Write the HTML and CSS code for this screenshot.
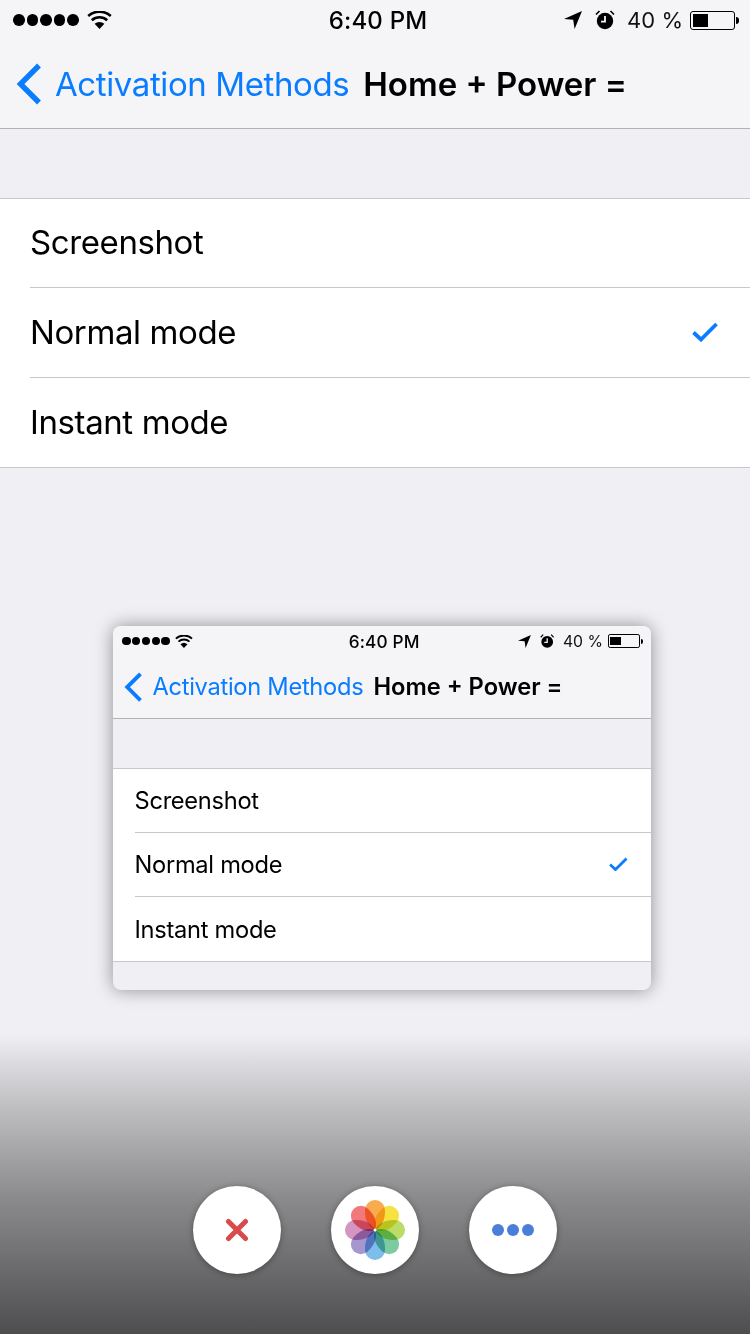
FILE: index.html
```html
<!DOCTYPE html>
<html lang="en">
<head>
  <meta charset="UTF-8" />
  <meta name="viewport" content="width=device-width, initial-scale=1.0"/>
  <title>Home + Power =</title>
  <link rel="stylesheet" href="styles.css">
</head>
<body>

<!-- icons shared by the page and its preview -->
<svg class="defs" width="0" height="0">
  <symbol id="i-wifi" viewBox="0 0 25 18">
    <path d="M7.600 12.800a7.400 7.400 0 0 1 9.800 0L12.500 18Z"/>
    <path d="M4.800 9.200a11.600 11.600 0 0 1 15.400 0" fill="none" stroke="#000" stroke-width="2.600"/>
    <path d="M1.200 5a17 17 0 0 1 22.600 0" fill="none" stroke="#000" stroke-width="2.600"/>
  </symbol>
  <symbol id="i-arrow" viewBox="0 0 18 18">
    <path d="M18 0 10.600 18l-1.400-9.200L0 8Z"/>
  </symbol>
  <symbol id="i-alarm" viewBox="0 0 20 20">
    <circle cx="10" cy="11" r="8.200"/>
    <path d="M10 6v5.600H6" fill="none" stroke="#f5f5f8" stroke-width="1.800"/>
    <path d="M1 4.500 4.500 1M19 4.500 15.500 1" fill="none" stroke="#000" stroke-width="1.600"/>
  </symbol>
  <symbol id="i-back" viewBox="0 0 26 42">
    <path d="M23 2.500 4.500 21 23 39.500" fill="none" stroke="#0a7cff" stroke-width="5.400"/>
  </symbol>
  <symbol id="i-check" viewBox="0 0 26 20">
    <path d="M1.500 10.500 9 17.500 24.500 2" fill="none" stroke="#0a7cff" stroke-width="3.800"/>
  </symbol>
</svg>

<main class="page">
  <div class="screen">
    <div class="status">
      <div class="status-left">
        <span class="signal"><i></i><i></i><i></i><i></i><i></i></span>
        <svg class="ic-wifi"><use href="#i-wifi"/></svg>
      </div>
      <div class="clock">6:40 PM</div>
      <div class="status-right">
        <svg class="ic-arrow"><use href="#i-arrow"/></svg>
        <svg class="ic-alarm"><use href="#i-alarm"/></svg>
        <span class="percent">40 %</span>
        <span class="battery"><b></b></span>
      </div>
    </div>
    <nav class="nav">
      <svg class="ic-back"><use href="#i-back"/></svg>
      <span class="back">Activation Methods</span>
      <span class="title">Home + Power =</span>
    </nav>
    <div class="spacer"></div>
    <ul class="list">
      <li>Screenshot</li>
      <li>Normal mode <svg class="ic-check"><use href="#i-check"/></svg></li>
      <li>Instant mode</li>
    </ul>
  </div>

  <div class="preview">
    <div class="screen">
      <div class="status">
        <div class="status-left">
          <span class="signal"><i></i><i></i><i></i><i></i><i></i></span>
          <svg class="ic-wifi"><use href="#i-wifi"/></svg>
        </div>
        <div class="clock">6:40 PM</div>
        <div class="status-right">
          <svg class="ic-arrow"><use href="#i-arrow"/></svg>
          <svg class="ic-alarm"><use href="#i-alarm"/></svg>
          <span class="percent">40 %</span>
          <span class="battery"><b></b></span>
        </div>
      </div>
      <nav class="nav">
        <svg class="ic-back"><use href="#i-back"/></svg>
        <span class="back">Activation Methods</span>
        <span class="title">Home + Power =</span>
      </nav>
      <div class="spacer"></div>
      <ul class="list">
        <li>Screenshot</li>
        <li>Normal mode <svg class="ic-check"><use href="#i-check"/></svg></li>
        <li>Instant mode</li>
      </ul>
    </div>
  </div>
</main>

<div class="actions">
  <button class="round" aria-label="Close">
    <svg width="24" height="24" viewBox="0 0 24 24">
      <path d="M3.500 3.500 20.500 20.500M20.500 3.500 3.500 20.500" stroke="#d84a4c" stroke-width="5" stroke-linecap="round"/>
    </svg>
  </button>
  <button class="round" aria-label="Photos">
    <svg width="64" height="64" viewBox="-32 -32 64 64">
      <defs>
        <path id="petal" d="M0 0C-9.500-5-10-14-10-20A10 10 0 0 1 10-20C10-14 9.500-5 0 0Z"/>
      </defs>
      <g class="flower">
        <use class="petal" href="#petal" fill="#f9a23c"/>
        <use class="petal" href="#petal" fill="#f5e02e" transform="rotate(45)"/>
        <use class="petal" href="#petal" fill="#b5d858" transform="rotate(90)"/>
        <use class="petal" href="#petal" fill="#6cc596" transform="rotate(135)"/>
        <use class="petal" href="#petal" fill="#6fb6e8" transform="rotate(180)"/>
        <use class="petal" href="#petal" fill="#9c8cca" transform="rotate(225)"/>
        <use class="petal" href="#petal" fill="#d08abb" transform="rotate(270)"/>
        <use class="petal" href="#petal" fill="#f06a6c" transform="rotate(315)"/>
      </g>
      <circle r="1.500" fill="#fff"/>
    </svg>
  </button>
  <button class="round" aria-label="More">
    <span class="dots"><i></i><i></i><i></i></span>
  </button>
</div>

</body>
</html>
```

FILE: styles.css
```css
* {
  margin: 0;
  padding: 0;
  box-sizing: border-box;
}

body {
  font-family: 'Inter', 'Roboto', sans-serif;
  background: #efeff4;
  width: 750px;
  height: 1334px;
  overflow: hidden;
  position: relative;
  color: #000;
}

.defs {
  position: absolute;
}

.status {
  height: 40px;
  display: flex;
  align-items: center;
  justify-content: space-between;
  position: relative;
  padding: 0 15px 0 13px;
  background: #f5f5f8;
}

.status-left,
.status-right {
  display: flex;
  align-items: center;
}

.signal {
  display: flex;
  gap: 2px;
}

.signal i {
  width: 11.600px;
  height: 11.600px;
  border-radius: 50%;
  background: #000;
}

.ic-wifi {
  width: 25px;
  height: 18px;
  margin-left: 8px;
}

.clock {
  position: absolute;
  left: 0;
  right: 0;
  text-align: center;
  font-size: 24px;
  font-weight: 500;
  letter-spacing: 0.2px;
  padding-left: 6px;
}

.ic-arrow {
  width: 18px;
  height: 18px;
}

.ic-alarm {
  width: 20px;
  height: 20px;
  margin-left: 13px;
}

.percent {
  font-size: 22px;
  color: #111;
  margin-left: 12px;
}

.battery {
  width: 45px;
  height: 19px;
  margin-left: 7px;
  border: 1px solid #000;
  border-radius: 3px;
  padding: 2px;
  position: relative;
  display: block;
}

.battery b {
  display: block;
  width: 15px;
  height: 100%;
  background: #000;
}

.battery::after {
  content: '';
  position: absolute;
  right: -5px;
  top: 5px;
  width: 3px;
  height: 7px;
  border-radius: 0 3px 3px 0;
  background: #000;
}

.nav {
  height: 89px;
  display: flex;
  align-items: center;
  padding: 0 0 1px 16px;
  background: #f5f5f8;
  border-bottom: 1px solid #b2b2b2;
}

.ic-back {
  width: 26px;
  height: 42px;
}

.back {
  font-size: 33px;
  letter-spacing: -0.4px;
  color: #0a7cff;
  margin-left: 13px;
}

.title {
  font-size: 33px;
  font-weight: 600;
  margin-left: 14px;
}

.spacer {
  height: 69px;
}

.list {
  list-style: none;
  background: #fff;
  border-top: 1px solid #c8c7cc;
  border-bottom: 1px solid #c8c7cc;
}

.list li {
  height: 90px;
  margin-left: 30px;
  padding: 0 32px 2px 0;
  display: flex;
  align-items: center;
  justify-content: space-between;
  font-size: 33px;
  letter-spacing: -0.4px;
  border-bottom: 1px solid #c8c7cc;
}

.list li:first-child {
  height: 89px;
}

.list li:last-child {
  height: 89px;
  border-bottom: none;
}

.ic-check {
  width: 26px;
  height: 20px;
}

.preview {
  width: 538px;
  height: 364px;
  margin: 158px 0 0 113px;
  background: #efeff4;
  border-radius: 8px;
  overflow: hidden;
  box-shadow: 0 0 18px rgba(0, 0, 0, 0.4);
}

.preview .screen {
  zoom: 0.7173;
}

.preview .status {
  padding-top: 2px;
}

.preview .nav {
  padding: 2px 0 0 16px;
}

.preview .list li {
  padding-bottom: 0;
}

.actions {
  position: absolute;
  left: 0;
  right: 0;
  bottom: 0;
  height: 300px;
  padding-top: 152px;
  display: flex;
  justify-content: center;
  gap: 50px;
  background: linear-gradient(to bottom, rgba(239, 239, 244, 0), #c3c3c6 22%, #8a8a8c 55%, #4e4e50);
}

.round {
  width: 88px;
  height: 88px;
  border: none;
  border-radius: 50%;
  background: #fff;
  display: flex;
  align-items: center;
  justify-content: center;
  box-shadow: 0 1px 6px rgba(0, 0, 0, 0.35);
}

.flower {
  isolation: isolate;
}

.petal {
  mix-blend-mode: multiply;
  opacity: 0.9;
}

.dots {
  display: flex;
  gap: 3px;
}

.dots i {
  width: 12px;
  height: 12px;
  border-radius: 50%;
  background: #4a7fd9;
}
```
